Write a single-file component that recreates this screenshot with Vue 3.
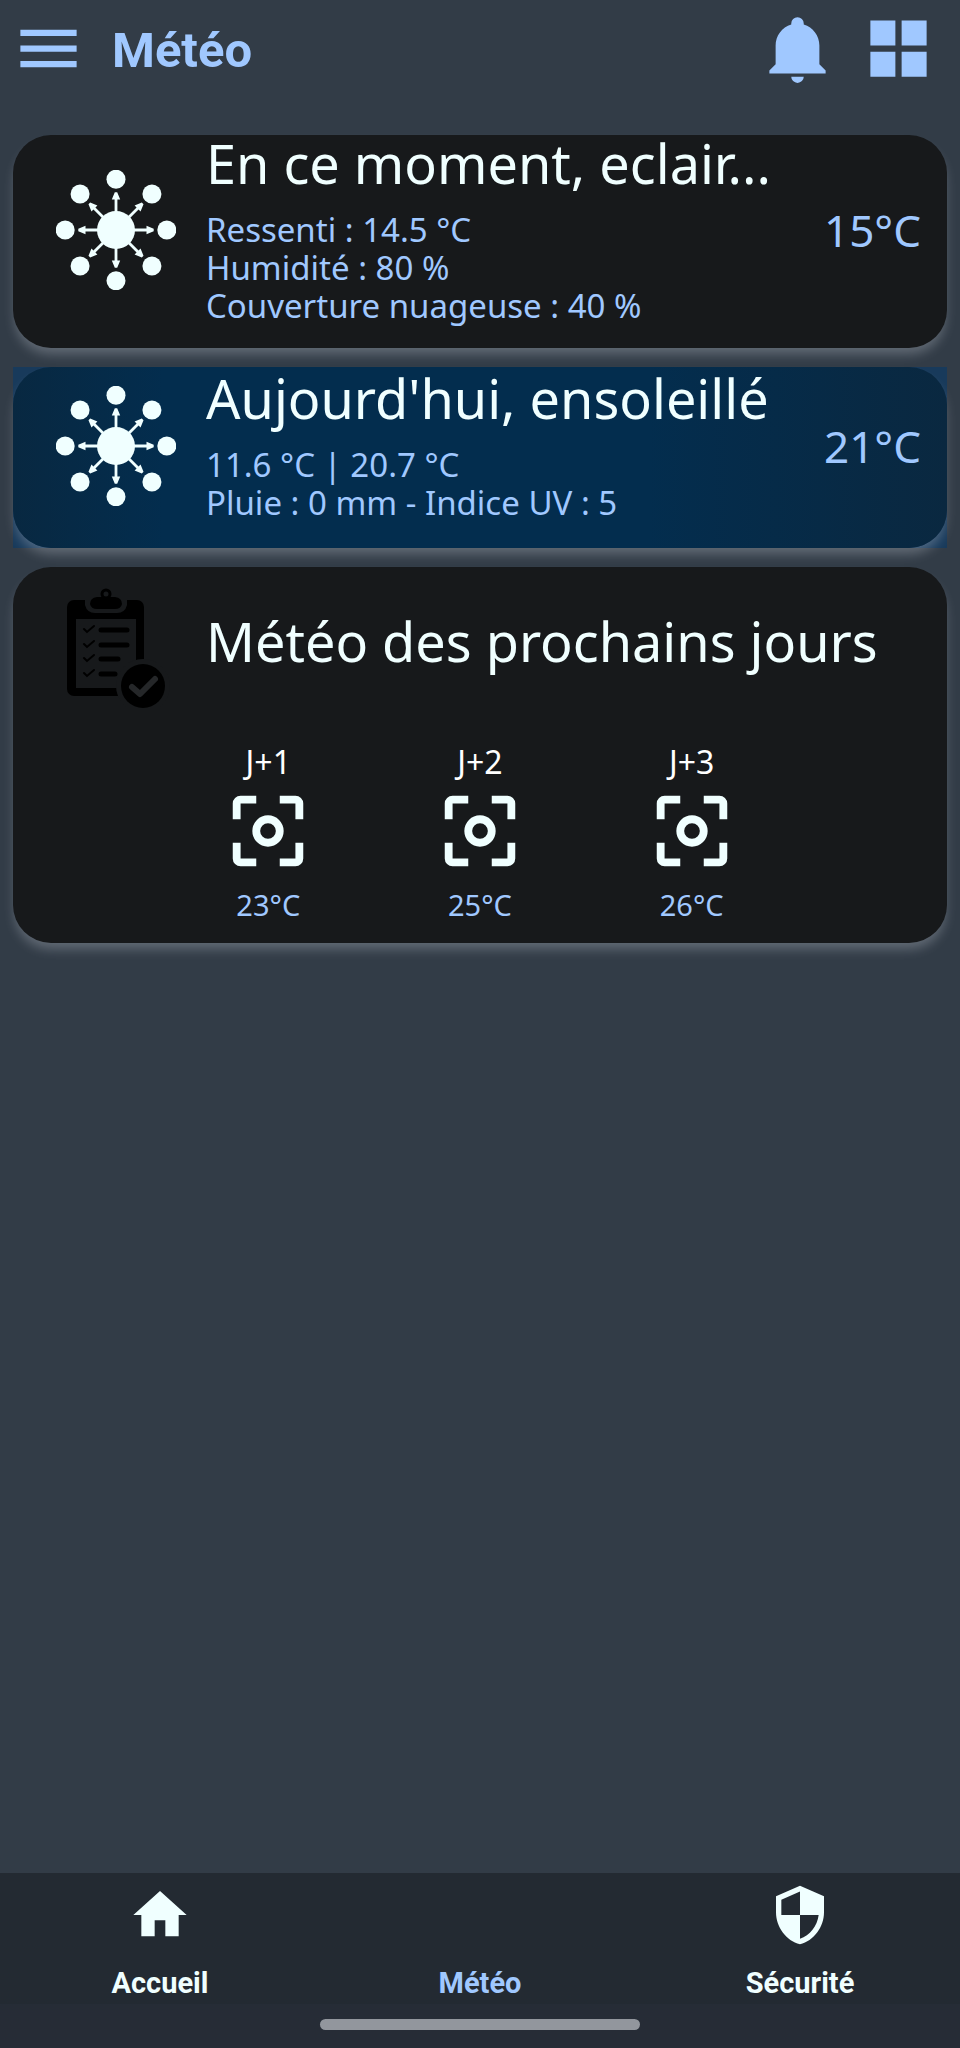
<script setup>
import { ref } from 'vue';

// Current conditions and today's forecast
const cards = ref([
    {
        title: 'En ce moment, eclair...',
        lines: ['Ressenti : 14.5 °C', 'Humidité : 80 %', 'Couverture nuageuse : 40 %'],
        temp: '15°C',
        highlight: false
    },
    {
        title: "Aujourd'hui, ensoleillé",
        lines: ['11.6 °C | 20.7 °C', 'Pluie : 0 mm - Indice UV : 5'],
        temp: '21°C',
        highlight: true
    }
]);

const days = ref([
    { label: 'J+1', temp: '23°C' },
    { label: 'J+2', temp: '25°C' },
    { label: 'J+3', temp: '26°C' }
]);

const tabs = [
    { id: 'home', label: 'Accueil', icon: 'M10,20V14H14V20H19V12H22L12,3L2,12H5V20H10Z' },
    { id: 'weather', label: 'Météo', icon: '' },
    {
        id: 'security',
        label: 'Sécurité',
        icon: 'M12,12H19C18.47,16.11 15.72,19.78 12,20.92V12H5V6.3L12,3.19M12,1L3,5V11C3,16.55 6.84,21.73 12,23C17.16,21.73 21,16.55 21,11V5L12,1Z'
    }
];
const activeTab = ref('weather');

const angles = [0, 45, 90, 135, 180, 225, 270, 315];
const checkRows = [
    { y: 42, end: 71 },
    { y: 57, end: 71 },
    { y: 71, end: 62 },
    { y: 86, end: 59 }
];
</script>

<template>
    <div class="app">
        <header class="topbar">
            <button class="icon-button" aria-label="Menu">
                <svg viewBox="0 0 24 24"><path d="M3,6H21V8H3V6M3,11H21V13H3V11M3,16H21V18H3V16Z" /></svg>
            </button>
            <h1>Météo</h1>
            <button class="icon-button" aria-label="Notifications">
                <svg viewBox="0 0 24 24">
                    <path d="M21,19V20H3V19L5,17V11C5,7.9 7.03,5.17 10,4.29C10,4.19 10,4.1 10,4A2,2 0 0,1 12,2A2,2 0 0,1 14,4C14,4.1 14,4.19 14,4.29C16.97,5.17 19,7.9 19,11V17L21,19M14,21A2,2 0 0,1 12,23A2,2 0 0,1 10,21" />
                </svg>
            </button>
            <button class="icon-button" aria-label="Tableau de bord">
                <svg viewBox="0 0 24 24"><path d="M3,11H11V3H3M3,21H11V13H3M13,21H21V13H13M13,3V11H21V3" /></svg>
            </button>
        </header>

        <main class="content">
            <!-- Weather cards -->
            <div v-for="card in cards" :key="card.title" class="card-wrap" :class="{ highlight: card.highlight }">
                <section class="card">
                    <div class="item">
                        <svg class="item-icon sun" viewBox="0 0 120 120">
                            <circle cx="60" cy="60" r="19" />
                            <g v-for="angle in angles" :key="angle" :transform="`rotate(${angle} 60 60)`">
                                <circle cx="60" cy="9.2" r="9.5" />
                                <path d="M58.6,44V29.5H55.8L58.8,22.3H61.2L64.2,29.5H61.4V44Z" />
                            </g>
                        </svg>
                        <div class="item-text">
                            <h2>{{ card.title }}</h2>
                            <div class="details">
                                <p v-for="line in card.lines" :key="line">{{ line }}</p>
                            </div>
                        </div>
                        <span class="temp">{{ card.temp }}</span>
                    </div>
                </section>
            </div>

            <!-- Next days -->
            <div class="card-wrap">
                <section class="card next-days">
                    <div class="item">
                        <svg class="item-icon" viewBox="0 0 120 120">
                            <rect x="11" y="12" width="77" height="96" rx="7" />
                            <rect class="cut" x="20" y="31" width="60" height="69" />
                            <path class="cut" d="M29,12H71V17Q69,25 61,25H39Q31,25 29,17Z" />
                            <path d="M34,16Q34,10 41,9H59Q66,10 66,16Q65,21 59,21H41Q35,21 34,16Z" />
                            <circle class="ring" cx="50" cy="6" r="4" />
                            <g v-for="row in checkRows" :key="row.y" class="strokes">
                                <path class="tick" :d="`M28,${row.y - 1}L31,${row.y + 2}L38,${row.y - 4}`" />
                                <path class="bar" :d="`M45,${row.y}H${row.end}`" />
                            </g>
                            <circle class="cut" cx="87" cy="98" r="27" />
                            <circle cx="87" cy="98" r="22" />
                            <path class="done" d="M76,99L84,106L99,91" />
                        </svg>
                        <div class="item-text">
                            <h2>Météo des prochains jours</h2>
                        </div>
                    </div>
                    <ul class="days">
                        <li v-for="day in days" :key="day.label">
                            <span class="day-label">{{ day.label }}</span>
                            <svg viewBox="0 0 24 24">
                                <path d="M5,5H9V3H5A2,2 0 0,0 3,5V9H5M19,3H15V5H19V9H21V5A2,2 0 0,0 19,3M19,19H15V21H19A2,2 0 0,0 21,19V15H19M5,15H3V19A2,2 0 0,0 5,21H9V19H5" />
                                <circle cx="12" cy="12" r="3" />
                            </svg>
                            <span class="day-temp">{{ day.temp }}</span>
                        </li>
                    </ul>
                </section>
            </div>
        </main>

        <nav class="tabs">
            <a v-for="tab in tabs" :key="tab.id" href="#" :class="{ active: activeTab === tab.id }" @click.prevent="activeTab = tab.id">
                <svg v-if="tab.icon" viewBox="0 0 24 24"><path :d="tab.icon" /></svg>
                <span>{{ tab.label }}</span>
            </a>
        </nav>
        <div class="gesture-bar"><span></span></div>
    </div>
</template>

<style>
body {
    margin: 0;
    background: #323c47;
}
</style>

<style scoped>
.app {
    min-height: 100vh;
    display: flex;
    flex-direction: column;
    background: #323c47;
    color: #f0ffff;
    font-family: "Noto Sans", sans-serif;
}

h1,
h2,
p,
ul {
    margin: 0;
    padding: 0;
    font-weight: 400;
}

/* Top bar */
.topbar {
    display: flex;
    align-items: flex-start;
    gap: 26px;
    padding: 11px 24px 0 11px;
    color: #a0c8ff;
}

.topbar h1 {
    flex: 1;
    font-family: Roboto, sans-serif;
    font-size: 49px;
    line-height: 80px;
    font-weight: 700;
}

.icon-button {
    width: 75px;
    height: 75px;
    padding: 0;
    border: none;
    background: none;
    color: inherit;
    cursor: pointer;
}

.icon-button svg {
    display: block;
    width: 100%;
    fill: currentColor;
}

/* Cards */
.content {
    flex: 1;
    display: flex;
    flex-direction: column;
    gap: 19px;
    padding: 44px 13px 19px;
}

.card {
    padding-bottom: 23px;
    border-radius: 38px;
    background: #17191b;
    box-shadow: 0 8px 12px -2px rgba(200, 205, 215, 0.32);
}

.highlight {
    background: #183a5b;
}

.highlight .card {
    background: linear-gradient(90deg, #082841, #032d4e 16%, #032d4e 68%, #0a2840);
}

.item {
    display: flex;
    align-items: center;
    gap: 30px;
    min-height: 158px;
    padding: 0 26px 0 43px;
}

.item-icon {
    flex: none;
    width: 120px;
    height: 120px;
}

.sun {
    fill: #f0ffff;
}

.item-text {
    flex: 1;
    min-width: 0;
}

/* Tall line box so that accents and descenders are not clipped */
.item-text h2 {
    margin: -9px 0 5px;
    font-size: 54px;
    line-height: 74px;
    white-space: nowrap;
    overflow: hidden;
    text-overflow: ellipsis;
}

.details {
    padding-top: 6px;
    color: #a0c8ff;
    font-size: 33px;
    line-height: 38px;
}

.temp {
    color: #a0c8ff;
    font-size: 44px;
    line-height: 56px;
}

.cut {
    fill: #17191b;
}

.ring {
    fill: none;
    stroke: #000;
    stroke-width: 3;
}

.strokes {
    fill: none;
    stroke: #000;
    stroke-linecap: round;
}

.tick {
    stroke-width: 2;
}

.bar {
    stroke-width: 5;
}

.done {
    fill: none;
    stroke: #252729;
    stroke-width: 6;
    stroke-linecap: round;
    stroke-linejoin: round;
}

/* Next days */
.next-days {
    padding-top: 2px;
    padding-bottom: 16px;
}

.days {
    display: grid;
    grid-template-columns: repeat(3, 1fr);
    padding: 13px 16% 0;
    list-style: none;
}

.days li {
    display: flex;
    flex-direction: column;
    align-items: center;
    line-height: 44px;
}

.days svg {
    width: 94px;
    height: 94px;
    margin-bottom: 5px;
    fill: #f0ffff;
}

.days circle {
    fill: none;
    stroke: #f0ffff;
    stroke-width: 2;
}

.day-label {
    color: #fff;
    font-size: 32px;
}

.day-temp {
    color: #a0c8ff;
    font-size: 29px;
}

/* Bottom navigation */
.tabs {
    display: flex;
    padding: 10px 0 3px;
    background: #232a32;
}

.tabs a {
    flex: 1;
    display: flex;
    flex-direction: column;
    align-items: center;
    justify-content: flex-end;
    gap: 18px;
    color: #f0ffff;
    font-family: Roboto, sans-serif;
    font-size: 29px;
    line-height: 36px;
    font-weight: 700;
    text-decoration: none;
}

.tabs a.active {
    color: #a0c8ff;
}

.tabs svg {
    width: 64px;
    height: 64px;
    fill: currentColor;
}

.gesture-bar {
    padding: 15px 0 18px;
    background: #262c36;
}

.gesture-bar span {
    display: block;
    width: calc(100% / 3);
    height: 11px;
    margin: 0 auto;
    border-radius: 6px;
    background: #92969d;
}
</style>
